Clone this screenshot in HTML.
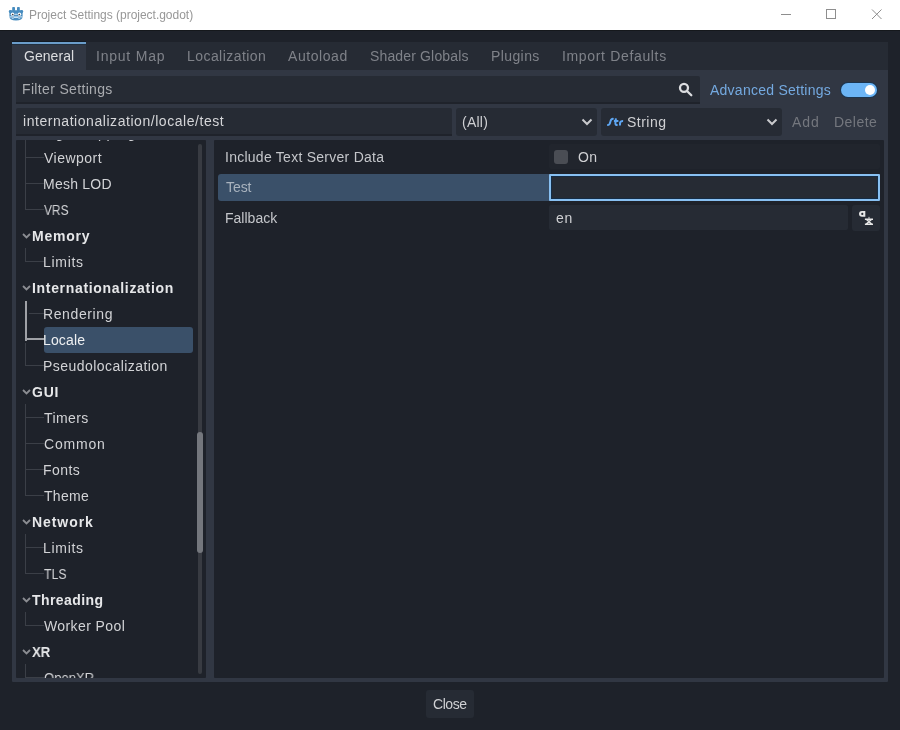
<!DOCTYPE html>
<html><head><meta charset="utf-8">
<style>
*{margin:0;padding:0;box-sizing:border-box}
html,body{width:900px;height:730px;overflow:hidden;-webkit-font-smoothing:antialiased;background:#1e222a;font-family:"Liberation Sans",sans-serif}
.a{position:absolute}
.t{position:absolute;white-space:nowrap;will-change:transform}
</style></head><body>
<div class="a" style="left:0;top:0;width:900px;height:30px;background:#fff"></div>
<div class="a" style="left:0;top:30px;width:900px;height:1px;background:#15181c"></div>
<svg class="a" style="left:8px;top:6px" width="16" height="16" viewBox="0 0 16 16">
 <g fill="#478cbf"><rect x="4.2" y="1" width="2.8" height="4" rx="0.8"/><rect x="9" y="1" width="2.8" height="4" rx="0.8"/>
 <circle cx="2.3" cy="5.4" r="1.5"/><circle cx="13.7" cy="5.4" r="1.5"/>
 <path d="M1.4 4.3 H14.6 V10.8 Q14.6 14.4 8 14.4 Q1.4 14.4 1.4 10.8 Z"/></g>
 <circle cx="4.6" cy="8.3" r="1.8" fill="#fff"/><circle cx="11.4" cy="8.3" r="1.8" fill="#fff"/>
 <circle cx="4.7" cy="8.5" r="0.85" fill="#414042"/><circle cx="11.3" cy="8.5" r="0.85" fill="#414042"/>
 <circle cx="8" cy="8.3" r="0.9" fill="#cde6f8"/>
 <path d="M1.4 10.9 H14.6" stroke="#e9f4fc" stroke-width="0.9"/>
 <path d="M3.8 12.3 L5.5 12.3 L6 11.5 L10 11.5 L10.5 12.3 L12.2 12.3" stroke="#cde6f8" stroke-width="0.9" fill="none"/>
</svg>
<svg class="a" style="left:0;top:0" width="900" height="30">
 <line x1="781" y1="14.5" x2="791" y2="14.5" stroke="#8e8e8e" stroke-width="1"/>
 <rect x="826.5" y="9.5" width="9" height="9" stroke="#8e8e8e" stroke-width="1" fill="none"/>
 <path d="M872 9.5 L881.5 19 M881.5 9.5 L872 19" stroke="#8e8e8e" stroke-width="1"/>
</svg>
<div class="a" style="left:12px;top:42px;width:876px;height:28px;background:#262b34"></div>
<div class="a" style="left:12px;top:42px;width:74px;height:28px;background:#313743;border-top:2px solid #6b9dca"></div>
<div class="a" style="left:12px;top:41px;width:74px;height:1px;background:#121a24"></div>
<div class="a" style="left:12px;top:44px;width:74px;height:1px;background:#22303f"></div>
<div class="a" style="left:12px;top:70px;width:876px;height:612px;background:#313743;border-radius:0 0 1px 1px"></div>
<div class="a" style="left:16px;top:76px;width:684px;height:28px;background:#262b34;border-radius:2px 2px 0 0;border-bottom:2px solid #1f232b"></div>
<svg class="a" style="left:676px;top:80px" width="20" height="20" viewBox="0 0 20 20">
 <circle cx="8" cy="7.8" r="4" stroke="#dcdde0" stroke-width="2.3" fill="none"/>
 <line x1="11" y1="11" x2="15.3" y2="15.3" stroke="#dcdde0" stroke-width="2.3" stroke-linecap="round"/>
</svg>
<div class="a" style="left:841px;top:82.5px;width:36px;height:14.5px;background:#6cb5f6;border-radius:8px;box-shadow:0 0 0 1px #1b3550"></div>
<div class="a" style="left:865px;top:85px;width:10px;height:10px;background:#fff;border-radius:50%"></div>
<div class="a" style="left:16px;top:108px;width:436px;height:28px;background:#262b34;border-radius:2px 2px 0 0;border-bottom:2px solid #1f232b"></div>
<div class="a" style="left:456px;top:108px;width:141px;height:28px;background:#262b34;border-radius:3px"></div>
<svg class="a" style="left:580px;top:116px" width="14" height="12"><path d="M2.5 3.5 L7 8 L11.5 3.5" stroke="#c9cacd" stroke-width="2" fill="none"/></svg>
<div class="a" style="left:601px;top:108px;width:181px;height:28px;background:#262b34;border-radius:3px"></div>
<svg class="a" style="left:765px;top:116px" width="14" height="12"><path d="M2.5 3.5 L7 8 L11.5 3.5" stroke="#c9cacd" stroke-width="2" fill="none"/></svg>
<svg class="a" style="left:602px;top:110px" width="30" height="24" viewBox="0 0 30 24">
 <path d="M11.6 8.9 C9.4 8.5 8.8 9.8 8.4 11.6 C8 13.8 7.6 15.3 5.2 15.1" stroke="#5ea6f2" stroke-width="2" fill="none"/>
 <path d="M13.9 8.4 L13.4 13.2 Q13.2 15.2 15.6 15.1 M11.9 11 H16.4" stroke="#5ea6f2" stroke-width="2" fill="none"/>
 <path d="M17.9 15.5 L18.2 11.8 M18.1 12.6 Q18.9 10.9 21.1 11" stroke="#5ea6f2" stroke-width="2" fill="none"/>
</svg>
<div class="a" style="left:16px;top:140px;width:190px;height:538px;background:#1e222a;border-radius:1px;overflow:hidden">
 <div class="a" style="left:182px;top:4px;width:4px;height:530px;background:#383b42;border-radius:2px"></div>
 <div class="a" style="left:181px;top:292px;width:6px;height:121px;background:#74777d;border-radius:3px"></div>
 <div class="a" style="left:28px;top:187px;width:149px;height:26px;background:#3a5069;border-radius:3px"></div>
 <div class="a" style="left:9px;top:0px;width:1px;height:70px;background:#3b3f47"></div>
 <div class="a" style="left:10px;top:-9px;width:18px;height:1px;background:#3b3f47"></div>
 <div class="a" style="left:10px;top:17px;width:18px;height:1px;background:#3b3f47"></div>
 <div class="a" style="left:10px;top:43px;width:18px;height:1px;background:#3b3f47"></div>
 <div class="a" style="left:10px;top:69px;width:18px;height:1px;background:#3b3f47"></div>
 <svg class="a" style="left:6px;top:92px" width="9" height="8"><path d="M1 2 L4.5 5.5 L8 2" stroke="#8b8d92" stroke-width="1.8" fill="none"/></svg>
 <div class="a" style="left:9px;top:108px;width:1px;height:14px;background:#3b3f47"></div>
 <div class="a" style="left:10px;top:121px;width:18px;height:1px;background:#3b3f47"></div>
 <svg class="a" style="left:6px;top:144px" width="9" height="8"><path d="M1 2 L4.5 5.5 L8 2" stroke="#8b8d92" stroke-width="1.8" fill="none"/></svg>
 <div class="a" style="left:9px;top:161px;width:2px;height:40px;background:#9fa1a6"></div>
 <div class="a" style="left:11px;top:198px;width:17px;height:2px;background:#9fa1a6"></div>
 <div class="a" style="left:13px;top:173px;width:15px;height:1px;background:#3b3f47"></div>
 <div class="a" style="left:9px;top:203px;width:1px;height:23px;background:#3b3f47"></div>
 <div class="a" style="left:10px;top:225px;width:18px;height:1px;background:#3b3f47"></div>
 <svg class="a" style="left:6px;top:248px" width="9" height="8"><path d="M1 2 L4.5 5.5 L8 2" stroke="#8b8d92" stroke-width="1.8" fill="none"/></svg>
 <div class="a" style="left:9px;top:264px;width:1px;height:92px;background:#3b3f47"></div>
 <div class="a" style="left:10px;top:277px;width:18px;height:1px;background:#3b3f47"></div>
 <div class="a" style="left:10px;top:303px;width:18px;height:1px;background:#3b3f47"></div>
 <div class="a" style="left:10px;top:329px;width:18px;height:1px;background:#3b3f47"></div>
 <div class="a" style="left:10px;top:355px;width:18px;height:1px;background:#3b3f47"></div>
 <svg class="a" style="left:6px;top:378px" width="9" height="8"><path d="M1 2 L4.5 5.5 L8 2" stroke="#8b8d92" stroke-width="1.8" fill="none"/></svg>
 <div class="a" style="left:9px;top:394px;width:1px;height:40px;background:#3b3f47"></div>
 <div class="a" style="left:10px;top:407px;width:18px;height:1px;background:#3b3f47"></div>
 <div class="a" style="left:10px;top:433px;width:18px;height:1px;background:#3b3f47"></div>
 <svg class="a" style="left:6px;top:456px" width="9" height="8"><path d="M1 2 L4.5 5.5 L8 2" stroke="#8b8d92" stroke-width="1.8" fill="none"/></svg>
 <div class="a" style="left:9px;top:472px;width:1px;height:14px;background:#3b3f47"></div>
 <div class="a" style="left:10px;top:485px;width:18px;height:1px;background:#3b3f47"></div>
 <svg class="a" style="left:6px;top:508px" width="9" height="8"><path d="M1 2 L4.5 5.5 L8 2" stroke="#8b8d92" stroke-width="1.8" fill="none"/></svg>
 <div class="a" style="left:9px;top:524px;width:1px;height:14px;background:#3b3f47"></div>
 <div class="a" style="left:10px;top:537px;width:18px;height:1px;background:#3b3f47"></div>
 <div class="t" style="left:27.0px;top:-13.9px;font-size:14px;line-height:14px;font-weight:400;color:#d2d3d6;letter-spacing:0.75px;">Lightmapping</div>
 <div class="t" style="left:28.0px;top:11.1px;font-size:14px;line-height:14px;font-weight:400;color:#d2d3d6;letter-spacing:0.48px;">Viewport</div>
 <div class="t" style="left:27.0px;top:37.1px;font-size:14px;line-height:14px;font-weight:400;color:#d2d3d6;letter-spacing:0.23px;">Mesh LOD</div>
 <div class="t" style="left:28.0px;top:63.1px;font-size:14px;line-height:14px;font-weight:400;color:#d2d3d6;transform:scaleX(0.851);transform-origin:0.0px 0;">VRS</div>
 <div class="t" style="left:16.0px;top:89.1px;font-size:14px;line-height:14px;font-weight:700;color:#e6e7e9;letter-spacing:0.76px;">Memory</div>
 <div class="t" style="left:27.0px;top:115.1px;font-size:14px;line-height:14px;font-weight:400;color:#d2d3d6;letter-spacing:0.69px;">Limits</div>
 <div class="t" style="left:16.0px;top:141.1px;font-size:14px;line-height:14px;font-weight:700;color:#e6e7e9;letter-spacing:0.68px;">Internationalization</div>
 <div class="t" style="left:27.0px;top:167.1px;font-size:14px;line-height:14px;font-weight:400;color:#d2d3d6;letter-spacing:0.61px;">Rendering</div>
 <div class="t" style="left:27.0px;top:193.1px;font-size:14px;line-height:14px;font-weight:400;color:#eef0f2;letter-spacing:0.15px;">Locale</div>
 <div class="t" style="left:27.0px;top:219.1px;font-size:14px;line-height:14px;font-weight:400;color:#d2d3d6;letter-spacing:0.45px;">Pseudolocalization</div>
 <div class="t" style="left:16.0px;top:245.1px;font-size:14px;line-height:14px;font-weight:700;color:#e6e7e9;letter-spacing:0.75px;">GUI</div>
 <div class="t" style="left:28.0px;top:271.1px;font-size:14px;line-height:14px;font-weight:400;color:#d2d3d6;letter-spacing:0.41px;">Timers</div>
 <div class="t" style="left:28.0px;top:297.1px;font-size:14px;line-height:14px;font-weight:400;color:#d2d3d6;letter-spacing:0.82px;">Common</div>
 <div class="t" style="left:27.0px;top:323.1px;font-size:14px;line-height:14px;font-weight:400;color:#d2d3d6;letter-spacing:0.45px;">Fonts</div>
 <div class="t" style="left:28.0px;top:349.1px;font-size:14px;line-height:14px;font-weight:400;color:#d2d3d6;letter-spacing:0.30px;">Theme</div>
 <div class="t" style="left:16.0px;top:375.1px;font-size:14px;line-height:14px;font-weight:700;color:#e6e7e9;letter-spacing:0.93px;">Network</div>
 <div class="t" style="left:27.0px;top:401.1px;font-size:14px;line-height:14px;font-weight:400;color:#d2d3d6;letter-spacing:0.69px;">Limits</div>
 <div class="t" style="left:28.0px;top:427.1px;font-size:14px;line-height:14px;font-weight:400;color:#d2d3d6;transform:scaleX(0.884);transform-origin:0.0px 0;">TLS</div>
 <div class="t" style="left:16.0px;top:453.1px;font-size:14px;line-height:14px;font-weight:700;color:#e6e7e9;letter-spacing:0.41px;">Threading</div>
 <div class="t" style="left:28.0px;top:479.1px;font-size:14px;line-height:14px;font-weight:400;color:#d2d3d6;letter-spacing:0.40px;">Worker Pool</div>
 <div class="t" style="left:16.0px;top:505.1px;font-size:14px;line-height:14px;font-weight:700;color:#e6e7e9;transform:scaleX(0.941);transform-origin:0.0px 0;">XR</div>
 <div class="t" style="left:28.0px;top:531.1px;font-size:14px;line-height:14px;font-weight:400;color:#d2d3d6;transform:scaleX(0.933);transform-origin:0.0px 0;">OpenXR</div>
</div>
<div class="a" style="left:214px;top:140px;width:670px;height:538px;background:#1e222a;border-radius:1px"></div>
<div class="a" style="left:549px;top:144px;width:331px;height:25px;background:#21252d;border-radius:2px"></div>
<div class="a" style="left:554px;top:150px;width:14px;height:14px;background:#4a4d54;border-radius:3px"></div>
<div class="a" style="left:218px;top:174px;width:662px;height:27px;background:#3a5069;border-radius:3px"></div>
<div class="a" style="left:549px;top:174px;width:331px;height:27px;background:#262b34;border:2px solid #88c0f2;border-radius:1px;box-shadow:inset 0 0 0 1px #142c45"></div>
<div class="a" style="left:549px;top:205px;width:299px;height:25px;background:#262b34;border-radius:2px"></div>
<div class="a" style="left:852px;top:205px;width:28px;height:26px;background:#262b34;border-radius:3px"></div>
<svg class="a" style="left:852px;top:205px" width="28" height="26" viewBox="0 0 28 26">
 <path d="M13.3 5.9 H10 A3 2.95 0 0 0 10 11.8 H13.3 Z" fill="#e6e6e6"/><circle cx="10.3" cy="8.9" r="1.1" fill="#262b34"/>
 <path d="M16.1 13.6 L17 11.6 L17.9 13.6 Z" fill="#e6e6e6"/>
 <path d="M12.9 14.3 H21 M12.9 19.3 H21 M14.2 14.3 L19.9 19.3 M19.7 14.3 L14 19.3" stroke="#e6e6e6" stroke-width="1.45" fill="none"/>
</svg>
<div class="a" style="left:426px;top:690px;width:48px;height:28px;background:#262b34;border-radius:3px"></div>
<div class="t" style="left:29.3px;top:8.5px;font-size:12px;line-height:12px;font-weight:400;color:#979797;letter-spacing:-0.02px;">Project Settings (project.godot)</div>
<div class="t" style="left:24.0px;top:49.1px;font-size:14px;line-height:14px;font-weight:400;color:#dcdde0;letter-spacing:0.05px;">General</div>
<div class="t" style="left:96.3px;top:49.1px;font-size:14px;line-height:14px;font-weight:400;color:#7f8289;letter-spacing:0.78px;">Input Map</div>
<div class="t" style="left:187.3px;top:49.1px;font-size:14px;line-height:14px;font-weight:400;color:#7f8289;letter-spacing:0.44px;">Localization</div>
<div class="t" style="left:288.3px;top:49.1px;font-size:14px;line-height:14px;font-weight:400;color:#7f8289;letter-spacing:0.56px;">Autoload</div>
<div class="t" style="left:370.0px;top:49.1px;font-size:14px;line-height:14px;font-weight:400;color:#7f8289;letter-spacing:0.15px;">Shader Globals</div>
<div class="t" style="left:491.3px;top:49.1px;font-size:14px;line-height:14px;font-weight:400;color:#7f8289;letter-spacing:0.40px;">Plugins</div>
<div class="t" style="left:562.4px;top:49.1px;font-size:14px;line-height:14px;font-weight:400;color:#7f8289;letter-spacing:0.66px;">Import Defaults</div>
<div class="t" style="left:21.5px;top:82.3px;font-size:14px;line-height:14px;font-weight:400;color:#a9abaf;letter-spacing:0.34px;">Filter Settings</div>
<div class="t" style="left:22.5px;top:113.8px;font-size:14px;line-height:14px;font-weight:400;color:#d5d6d9;letter-spacing:0.55px;">internationalization/locale/test</div>
<div class="t" style="left:710.0px;top:82.6px;font-size:14px;line-height:14px;font-weight:400;color:#74a9e0;letter-spacing:0.25px;">Advanced Settings</div>
<div class="t" style="left:461.7px;top:114.6px;font-size:14px;line-height:14px;font-weight:400;color:#cfd0d3;letter-spacing:0.24px;">(All)</div>
<div class="t" style="left:627.3px;top:114.9px;font-size:14px;line-height:14px;font-weight:400;color:#cfd0d3;letter-spacing:0.48px;">String</div>
<div class="t" style="left:792.0px;top:114.6px;font-size:14px;line-height:14px;font-weight:400;color:#74777e;letter-spacing:0.94px;">Add</div>
<div class="t" style="left:834.0px;top:114.6px;font-size:14px;line-height:14px;font-weight:400;color:#74777e;letter-spacing:0.46px;">Delete</div>
<div class="t" style="left:225.4px;top:150.1px;font-size:14px;line-height:14px;font-weight:400;color:#c4c6ca;letter-spacing:0.26px;">Include Text Server Data</div>
<div class="t" style="left:226.4px;top:180.1px;font-size:14px;line-height:14px;font-weight:400;color:#a9b3be;letter-spacing:-0.06px;">Test</div>
<div class="t" style="left:225.4px;top:210.7px;font-size:14px;line-height:14px;font-weight:400;color:#c4c6ca;letter-spacing:0.01px;">Fallback</div>
<div class="t" style="left:577.8px;top:150.2px;font-size:14px;line-height:14px;font-weight:400;color:#cfd0d3;letter-spacing:0.31px;">On</div>
<div class="t" style="left:555.6px;top:210.8px;font-size:14px;line-height:14px;font-weight:400;color:#cfd0d3;letter-spacing:0.81px;">en</div>
<div class="t" style="left:432.7px;top:697.3px;font-size:14px;line-height:14px;font-weight:400;color:#cfd0d3;letter-spacing:-0.45px;">Close</div>
</body></html>
